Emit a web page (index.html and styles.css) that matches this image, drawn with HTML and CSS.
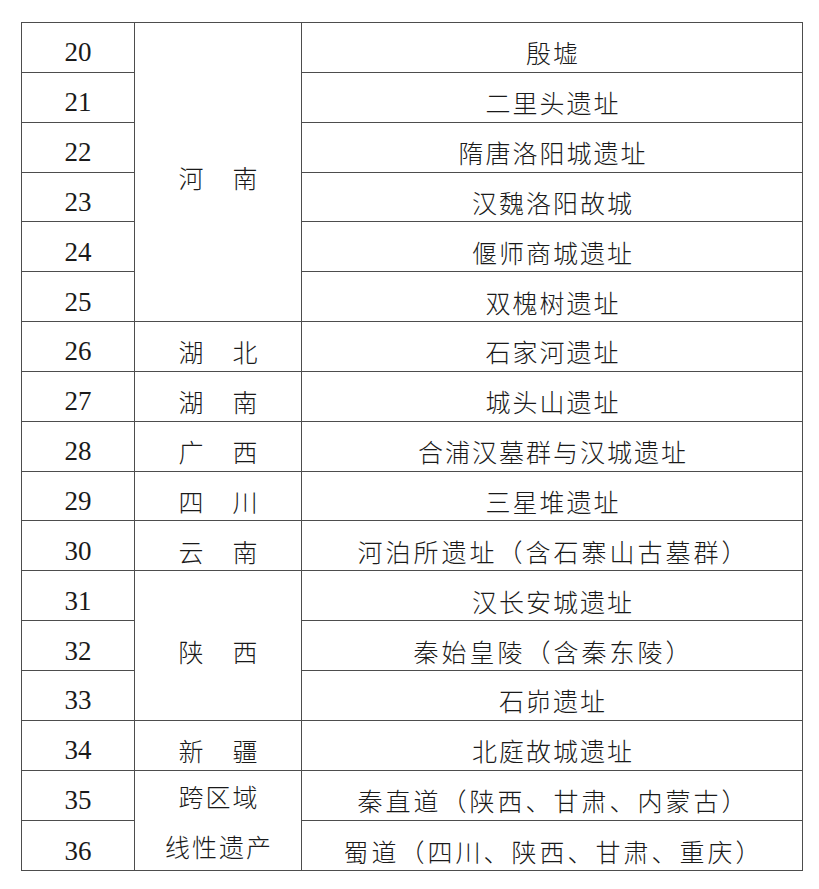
FILE: index.html
```html
<!DOCTYPE html>
<html lang="zh-CN">
<head>
<meta charset="utf-8">
<title>大遗址名单</title>
<link rel="stylesheet" href="styles.css">
</head>
<body>
<table class="list">
  <colgroup>
    <col class="c-num">
    <col class="c-prov">
    <col class="c-name">
  </colgroup>
  <tbody>
    <tr><td class="num">20</td><td class="prov" rowspan="6">河　南</td><td class="name">殷墟</td></tr>
    <tr><td class="num">21</td><td class="name">二里头遗址</td></tr>
    <tr><td class="num">22</td><td class="name">隋唐洛阳城遗址</td></tr>
    <tr><td class="num">23</td><td class="name">汉魏洛阳故城</td></tr>
    <tr><td class="num">24</td><td class="name">偃师商城遗址</td></tr>
    <tr><td class="num">25</td><td class="name">双槐树遗址</td></tr>
    <tr><td class="num">26</td><td class="prov">湖　北</td><td class="name">石家河遗址</td></tr>
    <tr><td class="num">27</td><td class="prov">湖　南</td><td class="name">城头山遗址</td></tr>
    <tr><td class="num">28</td><td class="prov">广　西</td><td class="name">合浦汉墓群与汉城遗址</td></tr>
    <tr><td class="num">29</td><td class="prov">四　川</td><td class="name">三星堆遗址</td></tr>
    <tr><td class="num">30</td><td class="prov">云　南</td><td class="name wide">河泊所遗址（含石寨山古墓群）</td></tr>
    <tr><td class="num">31</td><td class="prov" rowspan="3">陕　西</td><td class="name">汉长安城遗址</td></tr>
    <tr><td class="num">32</td><td class="name wide">秦始皇陵（含秦东陵）</td></tr>
    <tr><td class="num">33</td><td class="name">石峁遗址</td></tr>
    <tr><td class="num">34</td><td class="prov">新　疆</td><td class="name">北庭故城遗址</td></tr>
    <tr><td class="num">35</td><td class="prov two" rowspan="2"><span class="line">跨区域</span><span class="line">线性遗产</span></td><td class="name wide">秦直道（陕西、甘肃、内蒙古）</td></tr>
    <tr><td class="num">36</td><td class="name wide">蜀道（四川、陕西、甘肃、重庆）</td></tr>
  </tbody>
</table>
</body>
</html>
```

FILE: styles.css
```css
html, body {
  margin: 0;
  padding: 0;
  background: #ffffff;
}

.list {
  margin: 22px 0 0 21px;
  width: 782px;
  border-collapse: collapse;
  table-layout: fixed;
  color: #1a1a1a;
}

.c-num { width: 113px; }
.c-prov { width: 167px; }

.list td {
  border: 1px solid #4d4d4d;
  height: 49.85px;
  padding: 10px 0 0 0;
  box-sizing: border-box;
  text-align: center;
  vertical-align: middle;
  line-height: 30px;
  white-space: nowrap;
}

.num {
  font-family: "Liberation Serif", "Times New Roman", serif;
  font-size: 27px;
}

.prov, .name {
  font-family: "Noto Sans CJK SC", "Noto Sans", sans-serif;
  font-size: 25px;
  font-weight: 300;
  letter-spacing: 2px;
  text-indent: 2px;
}

.name.wide {
  letter-spacing: 3px;
  text-indent: 3px;
}

.prov.two {
  padding: 0;
}

.prov.two .line {
  display: block;
  height: 49.85px;
  box-sizing: border-box;
  padding-top: 10px;
  line-height: 30px;
}
```
